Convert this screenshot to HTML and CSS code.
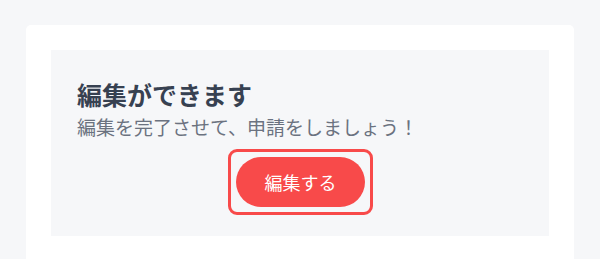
FILE: index.html
```html
<!DOCTYPE html>
<html lang="ja">
<head>
<meta charset="utf-8">
<link rel="stylesheet" href="styles.css">
</head>
<body>
<div class="card">
  <div class="notice">
    <h2 class="title">編集ができます</h2>
    <p class="desc">編集を完了させて、申請をしましょう！</p>
    <div class="actions">
      <span class="focus-ring"><button class="btn">編集する</button></span>
    </div>
  </div>
</div>
</body>
</html>
```
FILE: styles.css
```css
html, body {
  margin: 0;
  padding: 0;
  background: #f6f7f9;
  font-family: "Noto Sans CJK JP", "Noto Sans", sans-serif;
  overflow: hidden;
}
body {
  padding: 25px 26px 0 26px;
  height: 259px;
  box-sizing: border-box;
}
.card {
  background: #ffffff;
  border-radius: 5px 5px 0 0;
  padding: 25px 25px 40px 25px;
}
.notice {
  background: #f6f7f9;
  padding: 28px 26px 21px 26px;
}
.title {
  margin: 0;
  font-size: 25px;
  line-height: 32px;
  font-weight: 700;
  color: #374151;
}
.desc {
  margin: 3px 0 0 0;
  font-size: 19px;
  line-height: 28px;
  color: #6b7280;
}
.actions {
  display: flex;
  justify-content: center;
  margin-top: 8px;
}
.focus-ring {
  display: flex;
  padding: 5px;
  border: 3px solid #f84a4a;
  border-radius: 9px;
  margin-left: 1px;
}
.btn {
  width: 129px;
  height: 50px;
  border: none;
  border-radius: 25px;
  background: #f84a4a;
  color: #ffffff;
  font-family: inherit;
  font-size: 18px;
  padding: 0;
}
```
